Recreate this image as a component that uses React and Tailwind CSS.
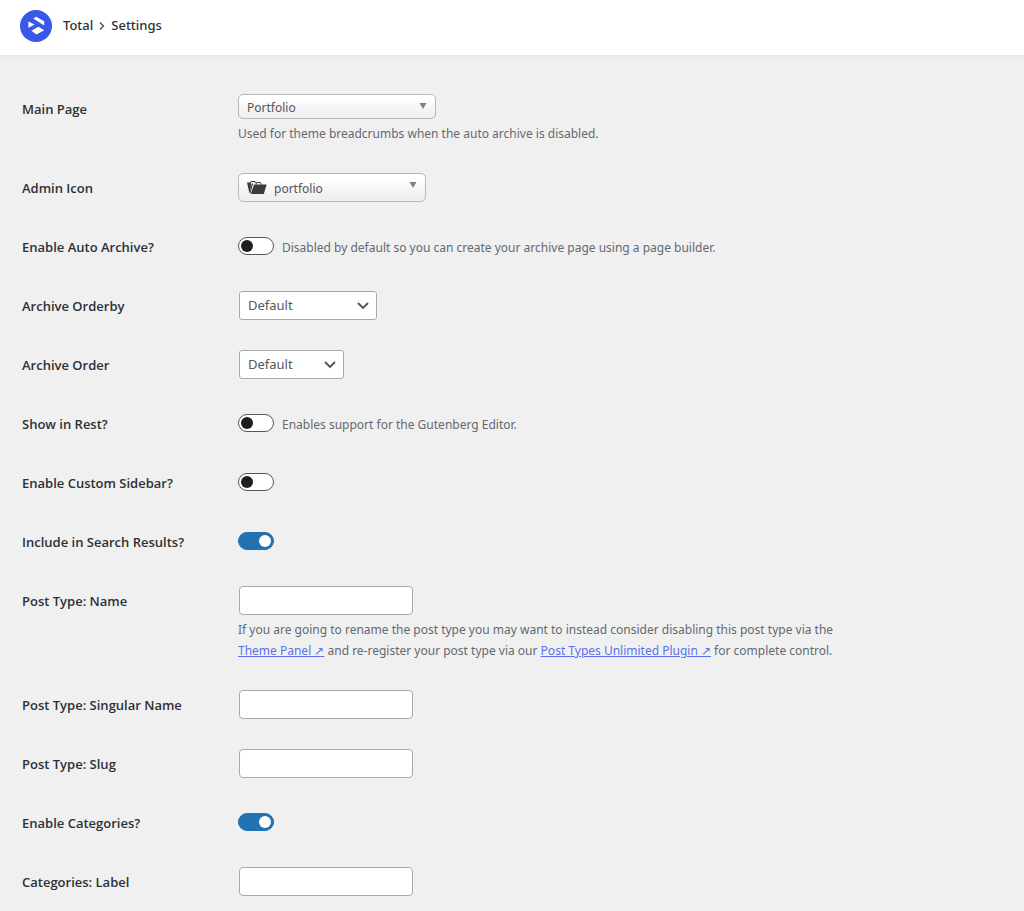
const Logo = () => (
  <svg className="size-8 shrink-0" viewBox="0 0 32 32" aria-hidden="true">
    <circle cx="16" cy="16" r="16" fill="#3858e9" />
    <path fill="#fff" d="M13.3 8.4 16.2 6.8 24.2 11.2 24.2 15.4ZM8.4 11.4 14.6 14.6 8.4 17.8ZM11.4 20.8 18.4 16.8 24.2 20.2 16.4 24.6Z" />
  </svg>
);

const FolderIcon = () => (
  <svg className="h-4 w-5" viewBox="0 0 20 16" aria-hidden="true">
    <path d="M0 2.5h3.2L4.5 4 2.5 13.5Z" fill="#3c3c3c" />
    <path d="M3 3.500 4 1.500h4l.5 1.500M9 4.500 9.500 2.500h4l.8 2" fill="none" stroke="#3c3c3c" />
    <path d="M5.600 3.500 3 13" fill="none" stroke="#3c3c3c" />
    <path d="M7 4.500h12.700L16.800 14H3.800Z" fill="#3c3c3c" />
  </svg>
);

const Chevron = () => (
  <svg className="pointer-events-none absolute right-2 top-2 size-3" viewBox="0 0 12 12" fill="none" aria-hidden="true">
    <path d="M1 4 6 9l5-5" stroke="#50575e" strokeWidth="1.9" />
  </svg>
);

const Caret = () => (
  <svg className="pointer-events-none absolute top-[9px] right-[9px] h-[6px] w-2" viewBox="0 0 8 6" aria-hidden="true">
    <path d="M.5 0h7L4 6Z" fill="#808080" />
  </svg>
);

const Row = ({ id, label, description, children }) => (
  <div className="flex min-h-[59px] pt-[15px] pb-[14px]">
    <label
      htmlFor={id}
      className="w-[216px] shrink-0 pt-[5px] font-['Open_Sans',sans-serif] text-[13px] leading-5 font-semibold text-[#2c3136]"
    >
      {label}
    </label>
    <div className="min-w-0 max-w-[620px] flex-1">
      {children}
      {description && <p className="mt-1 text-[12px] leading-[21px] text-[#646970]">{description}</p>}
    </div>
  </div>
);

const Toggle = ({ id, on, text }) => (
  <div className="flex items-start gap-2 pt-[5px]">
    <span className="relative flex">
      <input
        id={id}
        type="checkbox"
        defaultChecked={on}
        className="peer h-[18px] w-9 appearance-none rounded-full border border-[#50575e] bg-white checked:border-[#2271b1] checked:bg-[#2271b1]"
      />
      <span className="pointer-events-none absolute left-[3px] top-[3px] size-3 rounded-full bg-[#1e1e1e] peer-checked:left-[21px] peer-checked:bg-white" />
    </span>
    {text && <span className="text-[12px] leading-[21px] text-[#646970]">{text}</span>}
  </div>
);

const Select = ({ id, width }) => (
  <div className={`relative mx-px ${width}`}>
    <select id={id} className="block h-[29px] w-full appearance-none rounded-[3px] border border-[#a7aaad] bg-white px-2 pt-px text-[13px] text-[#50575e]">
      <option>Default</option>
    </select>
    <Chevron />
  </div>
);

const TextInput = ({ id }) => (
  <input id={id} type="text" className="mx-px block h-[29px] w-[174px] rounded-[4px] border border-[#a7aaad] bg-white px-2 text-[13px]" />
);

const chosen =
  'block w-full appearance-none rounded-[5px] border border-[#b8b8b8] bg-linear-to-b from-white from-20% via-[#f6f6f6] via-50% to-[#eee] pt-[2px] text-[12px] text-[#555]';

const ExternalLink = ({ label }) => (
  <a href="#" className="text-[#5a70ee] underline">
    {`${label} ↗`}
  </a>
);

export default function App() {
  return (
    <div className="min-h-screen bg-[#f0f0f0] font-['Noto_Sans',sans-serif]">
      <header className="flex h-[55px] items-center gap-[11px] bg-white px-5 pb-1 shadow-[0_2px_4px_rgba(0,0,0,0.04)]">
        <Logo />
        <nav className="flex items-center gap-[6px] text-[13px] font-medium text-[#2c3136]">
          <span>Total</span>
          <svg className="h-2 w-[6px]" viewBox="0 0 6 8" fill="none" aria-hidden="true">
            <path d="M1 .5 4.5 4 1 7.5" stroke="#3c434a" strokeWidth="1.2" />
          </svg>
          <span>Settings</span>
        </nav>
      </header>

      <form className="px-[22px] pt-6">
        <Row id="main" label="Main Page" description="Used for theme breadcrumbs when the auto archive is disabled.">
          <div className="relative w-[198px]">
            <select id="main" className={`${chosen} h-[25px] px-2`}>
              <option>Portfolio</option>
            </select>
            <Caret />
          </div>
        </Row>
        <Row id="icon" label="Admin Icon">
          <div className="relative w-[188px]">
            <select id="icon" className={`${chosen} h-[29px] pl-[35px]`}>
              <option>portfolio</option>
            </select>
            <span className="pointer-events-none absolute left-[9px] top-[7px]">
              <FolderIcon />
            </span>
            <Caret />
          </div>
        </Row>
        <Row id="archive" label="Enable Auto Archive?">
          <Toggle id="archive" text="Disabled by default so you can create your archive page using a page builder." />
        </Row>
        <Row id="orderby" label="Archive Orderby">
          <Select id="orderby" width="w-[138px]" />
        </Row>
        <Row id="order" label="Archive Order">
          <Select id="order" width="w-[105px]" />
        </Row>
        <Row id="rest" label="Show in Rest?">
          <Toggle id="rest" text="Enables support for the Gutenberg Editor." />
        </Row>
        <Row id="sidebar" label="Enable Custom Sidebar?">
          <Toggle id="sidebar" />
        </Row>
        <Row id="search" label="Include in Search Results?">
          <Toggle id="search" on />
        </Row>
        <Row
          id="name"
          label="Post Type: Name"
          description={
            <>
              If you are going to rename the post type you may want to instead consider disabling this post type via the{' '}
              <ExternalLink label="Theme Panel" /> and re-register your post type via our{' '}
              <ExternalLink label="Post Types Unlimited Plugin" /> for complete control.
            </>
          }
        >
          <TextInput id="name" />
        </Row>
        <Row id="singular" label="Post Type: Singular Name">
          <TextInput id="singular" />
        </Row>
        <Row id="slug" label="Post Type: Slug">
          <TextInput id="slug" />
        </Row>
        <Row id="categories" label="Enable Categories?">
          <Toggle id="categories" on />
        </Row>
        <Row id="categories-label" label="Categories: Label">
          <TextInput id="categories-label" />
        </Row>
      </form>
    </div>
  );
}
